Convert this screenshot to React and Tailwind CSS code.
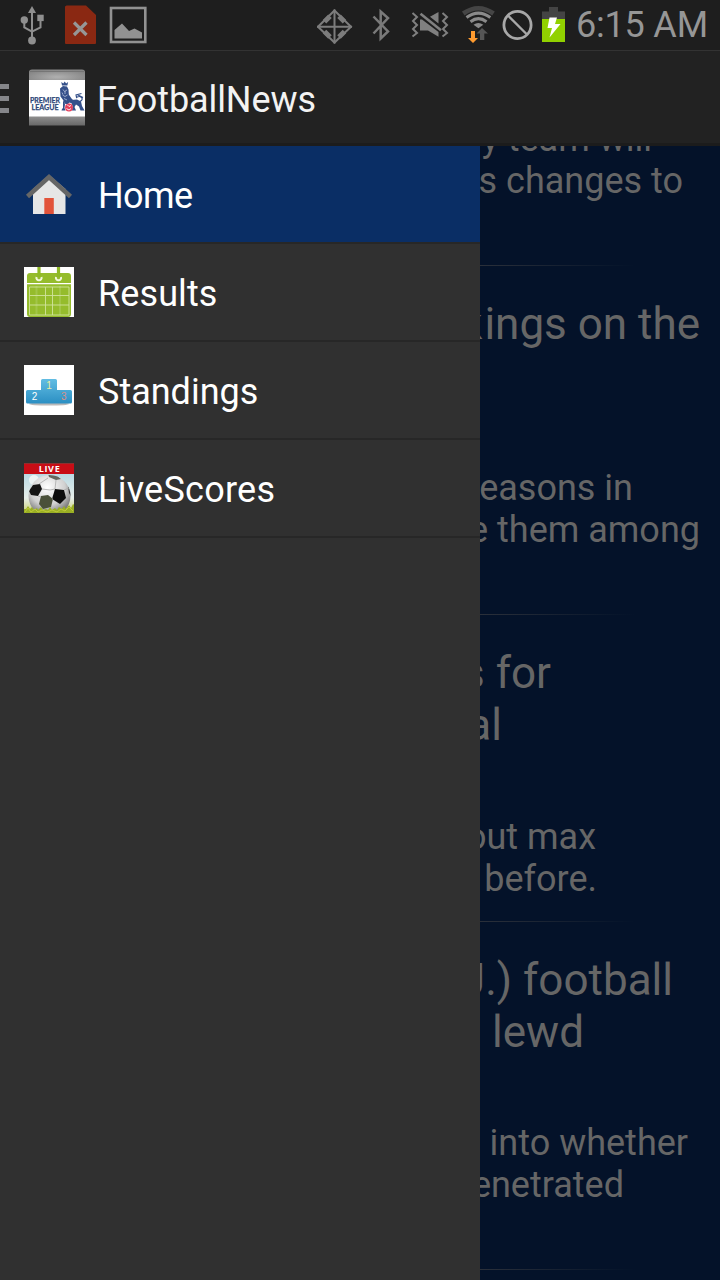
const RED_CARD = '#8a2812';

function UsbIcon() {
  return (
    <svg className="h-[50px] w-[32px]" viewBox="16 0 32 50" fill="#8f8f8f" stroke="#8f8f8f">
      <path d="M32 6l4 7h-8z" stroke="none" />
      <circle cx="24.3" cy="20" r="3.7" stroke="none" />
      <circle cx="32" cy="40.5" r="3.9" stroke="none" />
      <rect x="37.3" y="14.7" width="6.4" height="6.4" stroke="none" />
      <path d="M32 11v27M24.3 21v6.5l7.7 4.2M40.5 20v7.5L32 31.7" fill="none" strokeWidth="2" />
    </svg>
  );
}

function SimErrorIcon() {
  return (
    <svg className="h-[50px] w-[32px]" viewBox="64 0 32 50">
      <path d="M66.5 5.5H86l10 9.5v28a1 1 0 0 1-1 1H66a1 1 0 0 1-1-1V6.500z" fill={RED_CARD} />
      <path d="M74 22.500l12.500 12.500M86.500 22.500L74 35" stroke="#969696" strokeWidth="3.200" />
    </svg>
  );
}

function PictureIcon() {
  return (
    <svg className="h-[50px] w-[38px]" viewBox="109 0 38 50">
      <rect x="111" y="8" width="34.300" height="34" fill="none" stroke="#929292" strokeWidth="2.600" />
      <path d="M114.500 38.500V30l7.500-6.500 7 7.500 5.500-2.500 7.500 4v6z" fill="#929292" />
    </svg>
  );
}

function LocationIcon() {
  return (
    <svg className="h-[50px] w-[36px]" viewBox="317 0 36 50" fill="none" stroke="#7c7c7c">
      <path d="M334.500 10.500L351 26.700 334.500 42.500 318 26.700z" strokeWidth="2" />
      <path d="M324.500 21.800l5.500-5.500M344.500 21.800l-5.500-5.500M324.500 31.600l5.500 5.500M344.500 31.600l-5.500 5.500" strokeWidth="5" />
      <path d="M334.500 9.500v34M317 26.700h35" strokeWidth="2" />
    </svg>
  );
}

function BluetoothIcon() {
  return (
    <svg className="h-[50px] w-[20px]" viewBox="371 0 20 50" fill="none" stroke="#7a7a7a" strokeWidth="2.500">
      <path d="M373.500 16.500L388 31.500l-7.300 7V11.500l7.300 6.500L373.500 33.500" />
    </svg>
  );
}

function VibrateMuteIcon() {
  return (
    <svg className="h-[50px] w-[38px]" viewBox="411 0 38 50" fill="#808080" stroke="#808080">
      <path d="M412.500 13l4.500 4-4 4 4 4-4 4 4 4-4.500 3.500M442.500 13l4.500 4-4 4 4 4-4 4 4 4-4.500 3.500" fill="none" strokeWidth="2" />
      <path d="M420 19.500l2 0 16.500 12.500v4.800L428 30.500h-8zM430 16.800l8.500-4.800v11.500z" stroke="none" />
      <path d="M420.500 13.800L441 30.200" strokeWidth="2.600" />
    </svg>
  );
}

function WifiIcon() {
  return (
    <svg className="h-[50px] w-[34px]" viewBox="461 0 34 50">
      <path d="M463.300 13.500Q478.400 3 493.500 13.500" fill="none" stroke="#454545" strokeWidth="4.600" />
      <path d="M466.500 17.500Q478.400 8.700 490.300 17.500M470.500 21.700Q478.400 15.600 486.500 21.700" fill="none" stroke="#8a8a8a" strokeWidth="3" />
      <path d="M473.500 24.800Q478.400 21 483.300 24.800L478.400 28.300z" fill="#8a8a8a" />
      <path d="M471 31h4v7h3l-5 5-5-5h3z" fill="#ff9b2f" />
      <path d="M480 40v-6.500h-3.500l5.500-5.500 6 5.500h-3.700V40z" fill="#565656" />
    </svg>
  );
}

function BlockedIcon() {
  return (
    <svg className="h-[50px] w-[32px]" viewBox="501 0 32 50" fill="none" stroke="#a8a8a8">
      <circle cx="517.500" cy="25" r="13.600" strokeWidth="2.800" />
      <path d="M508 15.500l19 19" strokeWidth="2.400" />
    </svg>
  );
}

function BatteryIcon() {
  return (
    <svg className="h-[50px] w-[24px]" viewBox="541 0 24 50">
      <path d="M549 7h9v4.500h7V20h-23v-8.500h7z" fill="#444" />
      <path d="M542 19h23v23h-23z" fill="#91d100" />
      <path d="M549.500 17.500h7.500l-2 6.500h5.500L549.500 37.500l2.500-9.500h-4.500z" fill="#fff" />
    </svg>
  );
}

function LeagueLogo() {
  return (
    <svg className="h-[57px] w-[56px]" viewBox="0 0 56 57">
      <defs>
        <radialGradient id="cap" cx=".5" cy=".6" r=".6">
          <stop offset="0" stopColor="#b0b0b0" />
          <stop offset="1" stopColor="#858585" />
        </radialGradient>
        <linearGradient id="base" x2="0" y2="1">
          <stop offset="0" stopColor="#8e8e8e" />
          <stop offset="1" stopColor="#686868" />
        </linearGradient>
      </defs>
      <path d="M0 13V3Q0 .5 3 .5h50q3 0 3 2.500v10z" fill="url(#cap)" />
      <path d="M1 2.500h54" stroke="#707070" strokeWidth=".8" />
      <rect y="11" width="56" height="37" fill="#fff" />
      <rect y="47.500" width="56" height="9" fill="url(#base)" />
      <g fill="#34508a">
        <path d="M33 16.500l-.7-3.500 2 1.500 1.400-2 1.400 2 2-1.500-.7 3.500z" />
        <path d="M31 19.500l3-2.500 4 .5 1.500 3 .3 5 2.700 4 2 2-1.500 3-2.500-1-2 2-3-1-1-3-3-4z" />
        <path d="M34 31l2 4-.5 4 1 2.500h-4l.5-1.500 1-1zM42 31l6-.5 4 2 1 4.500 2.500 4.500h-4l-1.500-4-3-2-1.500 2.500 1.500 3.500h-4l.5-4z" />
      </g>
      <path d="M51 32.500q3.500-2 1.500-4t-5 0l-.500-2.500 5.500-1.500M54 28.500l-6-3" fill="none" stroke="#34508a" strokeWidth="1.100" />
      <path d="M34 20.500l1.500 2 2.500-1.500M36 22v3M33.500 26l2.500 1.500 2.500-1.500M35 29.500l3 1.500M33 23.500l1 2" fill="none" stroke="#b4c0da" strokeWidth=".8" />
      <circle cx="40" cy="38.500" r="3.900" fill="#e5405c" />
      <path d="M38 35.500l2 2 2-1M37.500 39.500l2.500 1.500 2-1.500" stroke="#fff" strokeWidth=".9" fill="none" />
      <g fontSize="8" fontWeight="700" fontFamily="Lato, sans-serif" fill="#2c4678" stroke="#2c4678" strokeWidth=".25">
        <text x="1" y="34.300" textLength="30" lengthAdjust="spacingAndGlyphs">PREMIER</text>
        <text x="2.500" y="41" textLength="27" lengthAdjust="spacingAndGlyphs">LEAGUE</text>
      </g>
    </svg>
  );
}

function HomeIcon() {
  return (
    <svg className="size-[50px]" viewBox="0 0 50 50">
      <path d="M9 20L25 6l16.500 14v25H9z" fill="#e6e6e6" />
      <path d="M20.300 29h9.500v16h-9.500z" fill="#e2533a" />
      <path d="M3.500 27.500L25 8l21.500 19.500" fill="none" stroke="#666" strokeWidth="4.600" />
    </svg>
  );
}

function CalendarIcon() {
  return (
    <svg className="size-[50px]" viewBox="0 0 50 50">
      <path d="M0 0h50v50H0z" fill="#fff" />
      <path d="M3 16V9q0-3 3-3h38q3 0 3 3v7zM3 17.300h44V47q0 3-3 3H6q-3 0-3-3z" fill="#95bc2c" />
      <path d="M12.500 10a2.600 2.600 0 1 0 5 0M32 10a2.600 2.600 0 1 0 5 0" fill="none" stroke="#f1f8dc" strokeWidth="2" />
      <path d="M15 0v10M34.500 0v10" stroke="#8fb927" strokeWidth="3.200" />
      <path d="M12.500 19v29M36 19v29" stroke="#b0cf62" strokeWidth="2" opacity=".5" />
      <path d="M5.500 20h39.500v28H5.500zM5.500 28.500H45M5.500 38H45M21.500 20v28M28.500 20v28" fill="none" stroke="#d0e39c" strokeWidth=".9" />
    </svg>
  );
}

function PodiumIcon() {
  return (
    <svg className="size-[50px]" viewBox="0 0 50 50">
      <defs>
        <linearGradient id="podium" x2="0" y2="1">
          <stop offset="0" stopColor="#62bde3" />
          <stop offset="1" stopColor="#2b8fc3" />
        </linearGradient>
      </defs>
      <path d="M0 0h50v50H0z" fill="#fff" />
      <ellipse cx="25" cy="39" rx="20" ry="1.600" fill="#b9b9b9" />
      <path d="M17 15.500q0-1.500 1.500-1.500h13q1.500 0 1.500 1.500v9.500h13.500q1.500 0 1.500 1.500v10.500q0 1.500-1.500 1.500h-43Q2 38.500 2 37V26.500Q2 25 3.500 25H17z" fill="url(#podium)" />
      <g fontFamily="Liberation Sans, sans-serif" fontSize="10" textAnchor="middle">
        <text x="25" y="23.500" fill="#e9efa0">1</text>
        <text x="10.500" y="34.500" fill="#fff">2</text>
        <text x="39.800" y="34.800" fill="#d5918a">3</text>
      </g>
    </svg>
  );
}

function LiveIcon() {
  return (
    <svg className="size-[50px]" viewBox="0 0 50 50">
      <defs>
        <linearGradient id="sky" x2="0" y2="1">
          <stop offset="0" stopColor="#a5cfe0" />
          <stop offset=".7" stopColor="#e7eeea" />
          <stop offset="1" stopColor="#c9d070" />
        </linearGradient>
        <radialGradient id="ball" cx=".45" cy=".3" r=".7">
          <stop offset="0" stopColor="#fff" />
          <stop offset=".6" stopColor="#d0d0d0" />
          <stop offset="1" stopColor="#666" />
        </radialGradient>
        <clipPath id="ballClip"><circle cx="25.500" cy="33" r="21" /></clipPath>
      </defs>
      <path d="M0 0h50v50H0z" fill="url(#sky)" />
      <circle cx="10" cy="17" r="5" fill="#edf4f5" />
      <circle cx="25.500" cy="33" r="21" fill="url(#ball)" />
      <g clipPath="url(#ballClip)">
        <path d="M9 22l7-1 2 5-4 7-7-1-2-4z" fill="#151515" />
        <path d="M31 26l9 1 2 8-6 6-8-5z" fill="#0c0c0c" />
        <path d="M24 11h7l6 5-5 1-7-3z" fill="#63675e" />
        <path d="M17 33l7-1 5 4-2 8-8 2-4-5z" fill="#4a5039" />
        <path d="M44 23l5 5-1 7-3-5z" fill="#333" />
        <path d="M15 21l9-6M32 17l-1 9M18 26l8 1 5-1M29 36l-1 0M40 27l5-2M14 33l3 1M42 35l4-3" fill="none" stroke="#a9a9a9" strokeWidth=".8" />
      </g>
      <path d="M0 50v-4l2 0 2-3 2 3 2-2 2 3 3-2 1 2 3-3 2 3 3-1 2 1 2-3 2 3 3-2 2 2 2-3 3 2 2-3 2 3 3-4 2 3 2-4 3 2v9z" fill="#9aaf24" />
      <path d="M1 49l3-4 3 4 4-3 3 3 4-2 5 2 5-2 5 2 4-3 4 2 4-4 4 4" fill="none" stroke="#c8d03c" strokeWidth=".8" />
      <path d="M0 0h50v11H0z" fill="#c80d16" />
      <path d="M0 .5h50" stroke="#8d3030" />
      <text x="25.200" y="8.600" textAnchor="middle" textLength="21" fontFamily="Open Sans, sans-serif" fontWeight="700" fontSize="9" fill="#fff">LIVE</text>
    </svg>
  );
}

const menu = [
  { label: 'Home', Icon: HomeIcon, row: 'bg-[#0a2e65]', text: 'tracking-[-0.6px]' },
  { label: 'Results', Icon: CalendarIcon, row: 'bg-[#303030]', text: 'tracking-[0.1px]' },
  { label: 'Standings', Icon: PodiumIcon, row: 'bg-[#303030]', text: 'tracking-[0px]' },
  { label: 'LiveScores', Icon: LiveIcon, row: 'bg-[#303030]', text: 'tracking-[0.25px]' },
];

const stories = [
  {
    title: [['ings on the', 'w-[220px]', 'rank'], ['', 'w-full']],
    body: [['easons in', 'w-[153px]', 'r'], ['name them among', 'w-[220px]'], ['', 'w-full']],
    gap: 'pt-[65px]',
  },
  {
    title: [['s for', 'w-[71px]'], ['al', 'w-[22px]']],
    body: [['about max', 'w-[116px]'], ['before.', 'w-[117px]']],
    gap: 'pt-[65px]',
  },
  {
    title: [['(N.J.) football', 'w-[193px]'], ['lewd', 'w-[104px]']],
    body: [['into whether', 'w-[208px]'], ['penetrated', 'w-[144px]'], ['', 'w-full']],
    gap: 'pt-[64px]',
  },
];

function Lines({ lines, size }) {
  return lines.map(([text, width, lead], i) => (
    <div key={i} className={`flex justify-end whitespace-nowrap ${size} ${width}`}>
      {lead && <span className="mr-0.5">{lead}</span>}
      <span>{text}</span>
    </div>
  ));
}

const BODY = 'h-[42px] text-[36px] leading-[42px]';
const TITLE = 'h-[52px] text-[44px] leading-[52px]';

function Divider() {
  return <div className="h-px bg-linear-to-r from-[#2b303a] to-[#041229] to-65%" />;
}

export default function App() {
  return (
    <div className="flex h-[1280px] w-[720px] flex-col overflow-hidden bg-[#303030] font-['Roboto',sans-serif]">
      <header className="flex h-[50px] shrink-0 items-center bg-[#1e1e1e] pl-4">
        <UsbIcon />
        <div className="ml-4 flex"><SimErrorIcon /></div>
        <div className="ml-[13px] flex"><PictureIcon /></div>
        <div className="ml-[170px] flex"><LocationIcon /></div>
        <div className="ml-[18px] flex"><BluetoothIcon /></div>
        <div className="ml-5 flex"><VibrateMuteIcon /></div>
        <div className="ml-3 flex"><WifiIcon /></div>
        <div className="ml-1.5 flex"><BlockedIcon /></div>
        <div className="ml-2 flex"><BatteryIcon /></div>
        <span className="ml-[11px] whitespace-nowrap text-[36px] leading-[50px] tracking-[-0.2px] text-[#969696]">6:15 AM</span>
      </header>

      <div className="flex h-[96px] shrink-0 items-center border-t border-b-[3px] border-t-[#333] border-b-[#1c1c1c] bg-[#222] pt-[2px]">
        <div className="flex w-[9px] flex-col gap-[7px] pt-px">
          <div className="h-[5px] bg-[#85868a]" />
          <div className="h-[5px] bg-[#85868a]" />
          <div className="h-[5px] bg-[#85868a]" />
        </div>
        <div className="ml-5 flex pb-px"><LeagueLogo /></div>
        <h1 className="ml-3 pt-1 text-[36px] leading-[42px] tracking-[-0.1px] text-[#f3f3f3]">FootballNews</h1>
      </div>

      <div className="flex min-h-0 flex-1">
        <nav className="w-[480px] shrink-0 bg-[#303030]">
          {menu.map(({ label, Icon, row, text }) => (
            <div key={label} className={`flex h-[98px] items-center border-b-2 border-[#272727] pl-6 ${row}`}>
              <Icon />
              <span className={`ml-6 pt-1 text-[36px] leading-[42px] text-white ${text}`}>{label}</span>
            </div>
          ))}
        </nav>
        <main className="w-[240px] overflow-hidden bg-[#041229] text-[#666]">
          <div className="-mt-7 pb-[21px]">
            <Lines size={BODY} lines={[['y team will', 'w-[172px]'], ['s changes to', 'w-[203px]'], ['', 'w-full']]} />
          </div>
          <Divider />
          {stories.map((story, i) => (
            <article key={i}>
              <div className="pt-8">
                <Lines size={TITLE} lines={story.title} />
              </div>
              <div className={`pb-[21px] ${story.gap}`}>
                <Lines size={BODY} lines={story.body} />
              </div>
              <Divider />
            </article>
          ))}
        </main>
      </div>
    </div>
  );
}
